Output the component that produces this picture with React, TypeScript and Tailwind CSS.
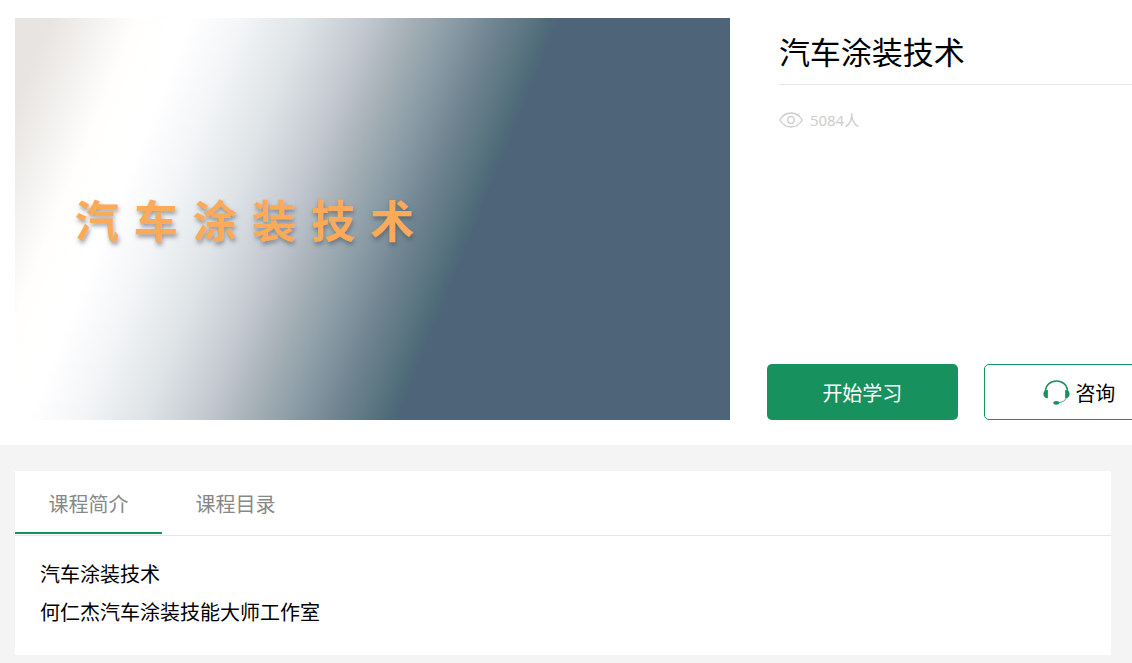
import React, { useState } from "react";

const tabs = ["课程简介", "课程目录"];
const coverTitle = ["汽", "车", "涂", "装", "技", "术"];

const EyeIcon = () => (
  <svg width="24" height="16" viewBox="0 0 24 16" fill="none" stroke="#cccccc" strokeWidth="1.3" aria-hidden="true">
    <path d="M0.8 8C3.4 3.6 7.4 1 12 1s8.600 2.600 11.200 7C20.600 12.400 16.600 15 12 15S3.400 12.400 0.800 8z" />
    <circle cx="12" cy="8" r="3.300" />
  </svg>
);

const HeadsetIcon = () => (
  <svg width="27" height="25" viewBox="0 0 27 25" fill="none" aria-hidden="true">
    <path d="M2.500 11.500C2.500 5 7.300 1 13.500 1s11 4 11 10.500" stroke="#17925f" strokeWidth="1.600" />
    <path d="M4.900 10v8.200C2.200 18.400 0.400 16.600 0.400 14S2.200 9.800 4.900 10z" fill="#17925f" />
    <path d="M22.100 10v8.200c2.700 0.200 4.500-1.600 4.500-4.200S24.800 9.800 22.100 10z" fill="#17925f" />
    <path d="M23.500 17.500c-1.300 3-3.700 4.800-8 5.300" stroke="#17925f" strokeWidth="0.800" />
    <ellipse cx="13.300" cy="22.800" rx="3" ry="1.900" fill="#17925f" />
  </svg>
);

const App = () => {
  const [active, setActive] = useState(0);

  return (
    <div className="min-h-screen overflow-hidden bg-[#f4f4f4] font-['Open_Sans','Noto_Sans_CJK_SC',sans-serif] text-black">
      <header className="flex bg-white pt-[18px] pb-[25px] pl-[15px]">
        {/* Course cover */}
        <div className="flex aspect-video w-[64%] shrink-0 items-center bg-[linear-gradient(112deg,#e7e4e1_0%,#e7e4e1_4%,#fffefc_14%,#ffffff_20%,#f3f5f7_26%,#dfe4e7_33%,#c4c9d1_40%,#a7b1b7_45%,#8b9ca6_50%,#6f8490_55%,#5a7580_59%,#4e6b79_61%,#4e6579_62%,#4e6579_100%)] pt-1 pl-[60px]">
          <div className="flex gap-[15px] text-[44px] leading-none font-bold text-[#fbaa59] [text-shadow:1px_3px_4px_rgba(60,70,80,0.5)]">
            {coverTitle.map((char) => (
              <span key={char}>{char}</span>
            ))}
          </div>
        </div>

        {/* Course info */}
        <div className="flex min-w-0 flex-1 flex-col justify-between pl-[37px]">
          <div className="pl-3">
            <h1 className="border-b border-[#e6e6e6] pt-[10px] pb-2 text-[31px] leading-[48px]">
              汽车涂装技术
            </h1>
            <p className="mt-[23px] flex items-center gap-[7px] text-[15px] leading-6 text-[#cccccc]">
              <EyeIcon />
              5084人
            </p>
          </div>
          <div className="flex gap-[26px] text-[20px]">
            <button type="button" className="h-14 w-[191px] shrink-0 rounded-[5px] bg-[#17925f] pt-1 text-white">
              开始学习
            </button>
            <button
              type="button"
              className="flex h-14 w-[191px] shrink-0 items-center justify-center gap-[5px] rounded-[5px] border border-[#17925f] bg-white"
            >
              <HeadsetIcon />
              <span className="pt-1">咨询</span>
            </button>
          </div>
        </div>
      </header>

      <main className="mt-[26px] mr-[21px] mb-2 ml-[15px] bg-white text-[20px]">
        <div role="tablist" className="flex border-b border-[#e6e6e6]">
          {tabs.map((tab, index) => (
            <button
              key={tab}
              type="button"
              role="tab"
              aria-selected={active === index}
              onClick={() => setActive(index)}
              className={`mb-px h-[63px] w-[147px] border-b-2 pt-[6px] text-[#888888] ${
                active === index ? "border-[#17925f]" : "border-transparent"
              }`}
            >
              {tab}
            </button>
          ))}
        </div>
        <div className="px-[25px] pt-5 pb-[23px] leading-[38px]">
          <p>汽车涂装技术</p>
          <p>何仁杰汽车涂装技能大师工作室</p>
        </div>
      </main>
    </div>
  );
};

export default App;
